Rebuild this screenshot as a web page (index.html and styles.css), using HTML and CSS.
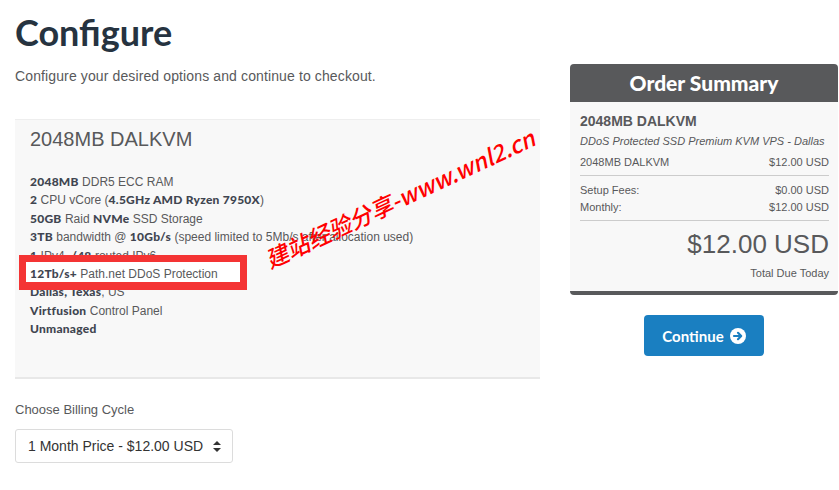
FILE: index.html
```html
<!DOCTYPE html>
<html lang="en">
<head>
    <meta charset="UTF-8">
    <meta name="viewport" content="width=device-width, initial-scale=1.0">
    <title>Configure</title>
    <link rel="stylesheet" href="styles.css">
</head>
<body>
    <div class="page">
        <div class="main">
            <h1>Configure</h1>
            <p class="intro">Configure your desired options and continue to checkout.</p>

            <div class="product-box">
                <div class="watermark">建站经验分享-www.wnl2.cn</div>
                <h2>2048MB DALKVM</h2>
                <ul class="features">
                    <li><b>2048MB</b> DDR5 ECC RAM</li>
                    <li><b>2</b> CPU vCore (<b>4.5GHz AMD Ryzen 7950X</b>)</li>
                    <li><b>50GB</b> Raid <b>NVMe</b> SSD Storage</li>
                    <li><b>3TB</b> bandwidth @ <b>10Gb/s</b> (speed limited to 5Mb/s after allocation used)</li>
                    <li><b>1</b> IPv4, <b>/48</b> routed IPv6</li>
                    <li class="marked"><span><b>12Tb/s+</b> Path.net DDoS Protection</span></li>
                    <li><b>Dallas, Texas</b>, US</li>
                    <li><b>Virtfusion</b> Control Panel</li>
                    <li><b>Unmanaged</b></li>
                </ul>
            </div>

            <div class="field">
                <label for="cycle">Choose Billing Cycle</label>
                <div class="select-wrap">
                    <select id="cycle">
                        <option>1 Month Price - $12.00 USD</option>
                    </select>
                    <svg class="caret" width="8" height="11" viewBox="0 0 8 11"><path d="M4 0 L8 4 L0 4 Z M0 7 L8 7 L4 11 Z" fill="#333"/></svg>
                </div>
            </div>
        </div>

        <div class="sidebar">
            <div class="summary">
                <div class="summary-head">Order Summary</div>
                <div class="summary-body">
                    <div class="product-name">2048MB DALKVM</div>
                    <div class="product-group">DDoS Protected SSD Premium KVM VPS - Dallas</div>
                    <div class="row"><span>2048MB DALKVM</span><span>$12.00 USD</span></div>
                    <div class="divider"></div>
                    <div class="row tight"><span>Setup Fees:</span><span>$0.00 USD</span></div>
                    <div class="row tight"><span>Monthly:</span><span>$12.00 USD</span></div>
                    <div class="divider"></div>
                    <div class="total">$12.00 USD</div>
                    <div class="total-label">Total Due Today</div>
                </div>
            </div>
            <button class="continue">Continue
                <svg width="16" height="16" viewBox="0 0 16 16"><circle cx="8" cy="8" r="8" fill="#fff"/><path d="M4 8 H11 M8 4.8 L11.2 8 L8 11.2" stroke="#1a7fc1" stroke-width="2.2" fill="none" stroke-linecap="round" stroke-linejoin="round"/></svg>
            </button>
        </div>
    </div>
</body>
</html>
```

FILE: styles.css
```css
body {
    margin: 0;
    font-family: "Liberation Sans", Arial, sans-serif;
    color: #58595b;
    background-color: #fff;
    overflow: hidden;
}
.page {
    display: flex;
    padding: 0 0 0 15px;
    gap: 30px;
}
.main {
    width: 525px;
    flex-shrink: 0;
}
h1 {
    margin: 0;
    padding-top: 9px;
    font-family: Lato, sans-serif;
    font-weight: 700;
    font-size: 36px;
    line-height: 46px;
    color: #263340;
}
.intro {
    margin: 11px 0 0;
    font-size: 14px;
    line-height: 20px;
    letter-spacing: 0.12px;
}
.product-box {
    position: relative;
    margin-top: 33px;
    background-color: #f8f8f8;
    border-top: 1px solid #eee;
    border-bottom: 2px solid #e8e8e8;
    padding: 7px 15px 0;
    height: 250px;
}
.product-box h2 {
    margin: 0;
    font-weight: normal;
    font-size: 20px;
    line-height: 24px;
    color: #58595b;
}
.features {
    list-style: none;
    margin: 22px 0 0;
    padding: 0;
    font-size: 12px;
    line-height: 18.4px;
}
.features b {
    font-family: Lato, sans-serif;
    font-weight: 900;
    letter-spacing: 0.25px;
    color: #404550;
}
.marked {
    position: relative;
}
.marked::before {
    content: "";
    position: absolute;
    left: -11px;
    top: -10px;
    width: 214px;
    height: 20px;
    border: 7px solid #f43434;
    border-bottom-width: 8px;
    background-color: #fff;
    z-index: 2;
}
.marked span {
    position: relative;
    z-index: 3;
}
.watermark {
    position: absolute;
    left: 251px;
    top: 125px;
    transform: rotate(-25deg);
    transform-origin: left center;
    font-family: "Noto Sans CJK SC", sans-serif;
    font-size: 23px;
    line-height: 30px;
    font-weight: 500;
    font-style: italic;
    color: #f00;
    white-space: nowrap;
    z-index: 5;
}
.field {
    margin-top: 22px;
}
.field label {
    display: block;
    font-size: 13px;
    line-height: 18px;
    margin-bottom: 10px;
}
.select-wrap {
    position: relative;
    width: 218px;
}
select {
    width: 218px;
    height: 34px;
    padding: 0 12px;
    border: 1px solid #dcdcdc;
    border-radius: 3px;
    background-color: #fff;
    font-family: "Liberation Sans", Arial, sans-serif;
    font-size: 14px;
    color: #333;
    appearance: none;
}
.caret {
    position: absolute;
    right: 12px;
    top: 12px;
}
.sidebar {
    margin-top: 64px;
    width: 268px;
    display: flex;
    flex-direction: column;
    align-items: center;
}
.summary {
    width: 100%;
    background-color: #f8f8f8;
    border-radius: 4px;
    border-bottom: 4px solid #58595b;
}
.summary-head {
    background-color: #58595b;
    color: #fff;
    border-radius: 4px 4px 0 0;
    text-align: center;
    font-family: Lato, sans-serif;
    font-weight: 900;
    font-size: 21px;
    line-height: 38px;
}
.summary-body {
    padding: 10px 9px 10px 10px;
    font-size: 11px;
    color: #58595b;
}
.product-name {
    font-size: 14px;
    font-weight: bold;
    line-height: 18px;
}
.product-group {
    font-style: italic;
    line-height: 16px;
    margin-top: 3px;
}
.row {
    display: flex;
    justify-content: space-between;
    line-height: 16px;
    margin-top: 5px;
}
.row.tight {
    margin-top: 1px;
}
.divider {
    border-top: 1px solid #ccc;
    margin: 5px 0 6px;
}
.total {
    text-align: right;
    font-size: 26px;
    line-height: 34px;
    margin-top: 2px;
}
.total-label {
    text-align: right;
    line-height: 16px;
    margin-top: 4px;
}
.continue {
    margin-top: 20px;
    width: 120px;
    height: 41px;
    background-color: #1a7fc1;
    color: #fff;
    border: none;
    border-radius: 4px;
    font-family: Lato, sans-serif;
    font-weight: 700;
    font-size: 15px;
    display: flex;
    align-items: center;
    justify-content: center;
    gap: 6px;
    cursor: pointer;
}
```
